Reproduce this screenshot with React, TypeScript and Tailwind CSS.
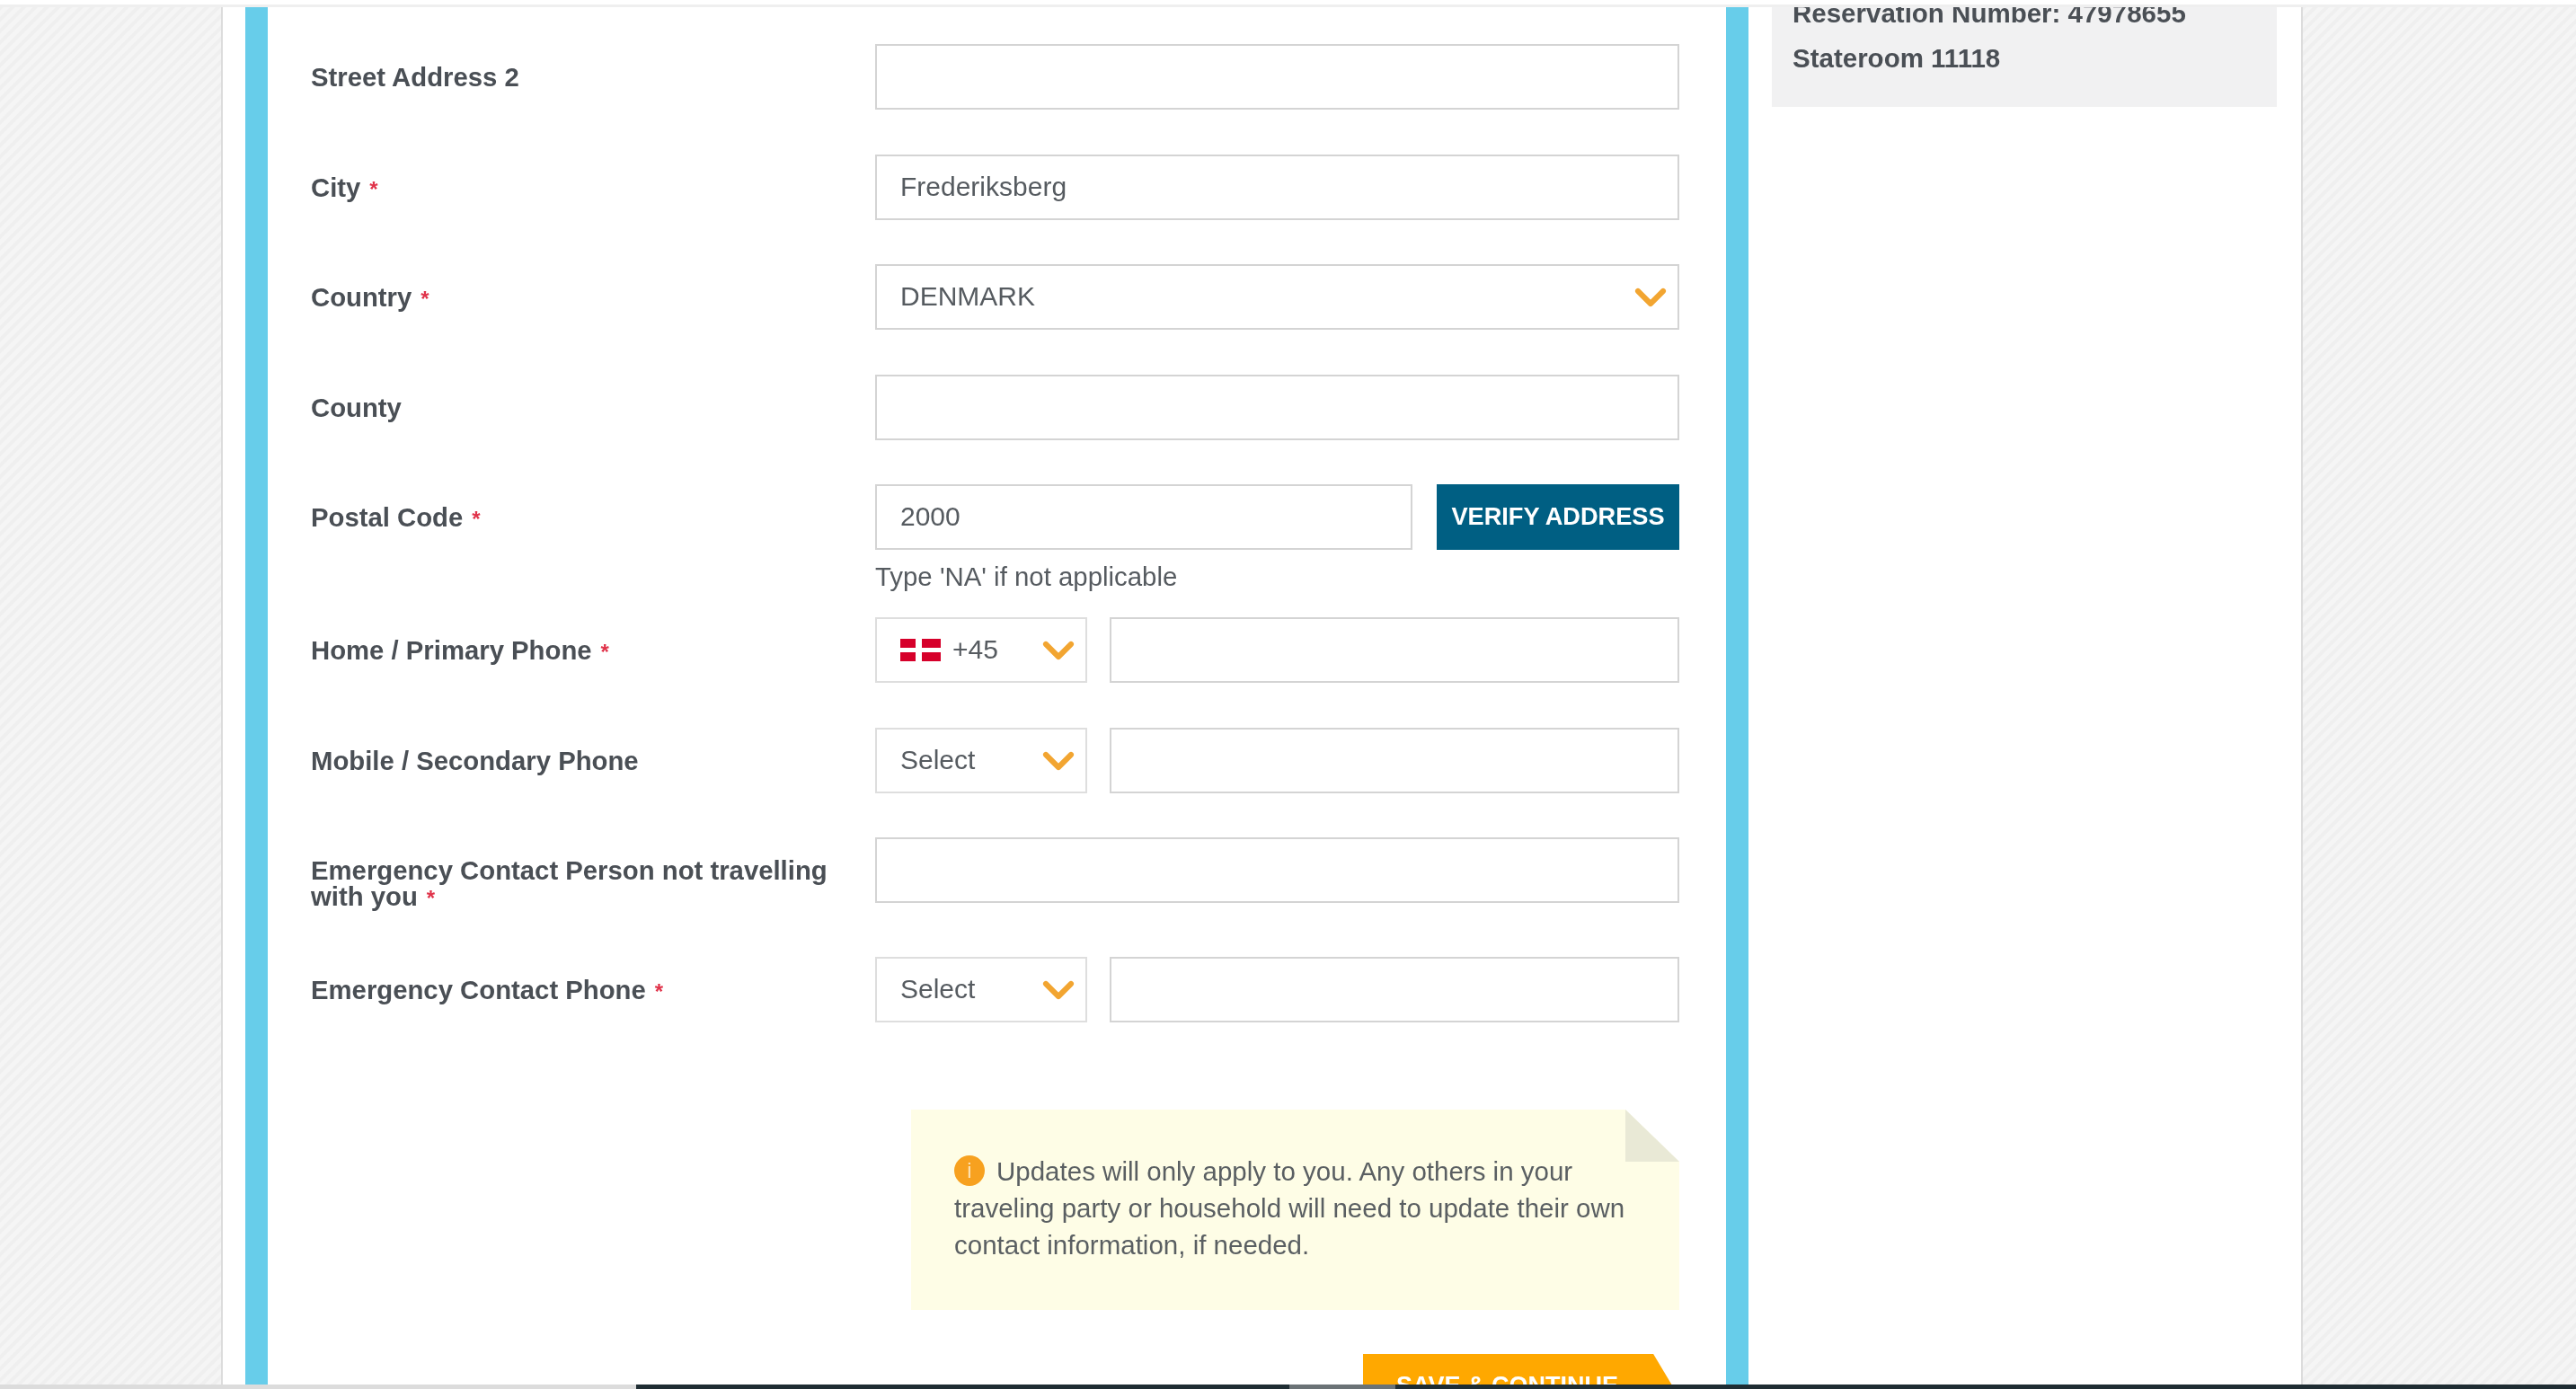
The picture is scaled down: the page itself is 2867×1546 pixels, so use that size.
import { ChevronDown } from 'lucide-react'

const Required = () => <span className="ml-[10px] text-[24px] leading-none text-[#e0334a]">*</span>

const Label = ({ text, required }: { text: string; required?: boolean }) => (
  <label className="w-[628px] shrink-0 pr-[30px] pt-[22px] text-[29.3px] leading-[29px] font-bold text-[#4a4f55]">
    {text}
    {required && <Required />}
  </label>
)

const Field = ({ value }: { value?: string }) => (
  <div className="flex h-[73px] min-w-0 flex-1 items-center border-2 border-[#d4d4d4] bg-white px-[26px] pb-[2px] text-[30px] text-[#565b60]">
    {value}
  </div>
)

const Chevron = () => (
  <ChevronDown className="mr-[2px] shrink-0 text-[#f2a531]" size={56} strokeWidth={2.6} />
)

const Flag = () => (
  <svg width="45" height="25" viewBox="0 0 45 25" className="mr-[13px] shrink-0">
    <rect width="45" height="25" fill="#d6002a" />
    <rect x="17" width="7" height="25" fill="#fff" />
    <rect y="10" width="45" height="5" fill="#fff" />
  </svg>
)

const CodeSelect = ({ flag, value }: { flag?: boolean; value: string }) => (
  <div className="flex h-[73px] w-[236px] shrink-0 items-center border-2 border-[#dedede] bg-white pl-[26px] text-[30px] text-[#565b60]">
    {flag && <Flag />}
    <span className="flex-1 pb-[2px]">{value}</span>
    <Chevron />
  </div>
)

const PhoneField = ({ flag, value }: { flag?: boolean; value: string }) => (
  <div className="flex flex-1 gap-[25px]">
    <CodeSelect flag={flag} value={value} />
    <Field />
  </div>
)

const Row = ({
  text,
  required,
  className,
  children,
}: {
  text: string
  required?: boolean
  className: string
  children: React.ReactNode
}) => (
  <div className={`flex ${className}`}>
    <Label text={text} required={required} />
    {children}
  </div>
)

export default function App() {
  return (
    <div className="relative flex h-[1546px] w-full overflow-hidden bg-white font-['Liberation_Sans',Arial,sans-serif] blur-[0.7px]">
      {/* top edge of the frame */}
      <div className="absolute inset-x-0 top-0 z-20 h-[8px] border-b-[3px] border-[#efefef] bg-white" />
      {/* bottom scrollbar */}
      <div className="absolute inset-x-0 bottom-0 z-20 flex h-[5px] bg-[#dcdcdc]">
        <div className="ml-[708px] w-[727px] bg-[#1f2d33]" />
        <div className="w-[118px] bg-[#6b7376]" />
        <div className="flex-1 bg-[#1f2d33]" />
      </div>

      {/* hatched page background */}
      <div className="w-[248px] shrink-0 border-r-2 border-[#dcdcdc] bg-[repeating-linear-gradient(135deg,#f5f5f5_0px,#f5f5f5_4px,#efefef_5px,#efefef_8px,#f5f5f5_9px)]" />

      <div className="flex w-[2313px] shrink-0 pl-[25px]">
        <div className="w-[25px] shrink-0 bg-[#67cdea]" />

        {/* form column */}
        <main className="w-[1623px] shrink-0 pl-[48px] pr-[52px] pt-[49px]">
          <Row text="Street Address 2" className="mb-[50px]">
            <Field />
          </Row>
          <Row text="City" required className="mb-[49px]">
            <Field value="Frederiksberg" />
          </Row>
          <Row text="Country" required className="mb-[50px]">
            <div className="flex h-[73px] flex-1 items-center border-2 border-[#d4d4d4] bg-white pl-[26px] text-[30px] text-[#565b60]">
              <span className="flex-1 pb-[2px]">DENMARK</span>
              <Chevron />
            </div>
          </Row>
          <Row text="County" className="mb-[49px]">
            <Field />
          </Row>
          <Row text="Postal Code" required className="mb-[88px]">
            <div className="flex-1">
              <div className="flex gap-[27px]">
                <Field value="2000" />
                <button className="h-[73px] w-[270px] shrink-0 bg-[#005f83] text-[27.2px] font-bold text-white">
                  VERIFY ADDRESS
                </button>
              </div>
              <p className="-mb-[60px] mt-[13px] text-[29.4px] leading-[34px] text-[#565b60]">
                Type 'NA' if not applicable
              </p>
            </div>
          </Row>
          <Row text="Home / Primary Phone" required className="mb-[50px]">
            <PhoneField flag value="+45" />
          </Row>
          <Row text="Mobile / Secondary Phone" className="mb-[49px]">
            <PhoneField value="Select" />
          </Row>
          <Row text="Emergency Contact Person not travelling with you" required className="mb-[53px]">
            <Field />
          </Row>
          <Row text="Emergency Contact Phone" required className="mb-[97px]">
            <PhoneField value="Select" />
          </Row>

          {/* notice */}
          <div className="relative ml-[668px] h-[223px] w-[855px] bg-[#fefde6] pl-[48px] pr-[50px] pt-[48px] text-[29.5px] leading-[41px] text-[#5a5f62]">
            <svg className="absolute right-0 top-0" width="60" height="58" viewBox="0 0 60 58">
              <polygon points="0,0 60,0 60,58" fill="#fff" />
              <polygon points="0,0 60,58 0,58" fill="#e9e9d6" />
            </svg>
            <span className="mr-[13px] inline-flex h-[34px] w-[34px] -translate-y-[3px] items-center justify-center rounded-full bg-[#f7a11f] align-baseline text-[24px] leading-none text-[#fde2b4]">
              i
            </span>
            Updates will only apply to you. Any others in your traveling party or household will need to update their own contact information, if needed.
          </div>

          <div className="mt-[49px] flex justify-end">
            <div className="mr-[-7px] h-[60px] w-[359px] bg-[#ffa800] pr-[38px] pt-[18px] text-center text-[27px] font-bold leading-[34px] text-[#fff] [clip-path:polygon(0_0,90%_0,100%_100%,0_100%)]">
              SAVE &amp; CONTINUE
            </div>
          </div>
        </main>

        <div className="w-[25px] shrink-0 bg-[#67cdea]" />

        {/* reservation sidebar */}
        <aside className="flex-1 pl-[26px] pr-[27px]">
          <div className="flow-root h-[119px] bg-[#f1f1f2] pl-[23px] text-[29.5px] leading-[50px] font-bold text-[#4a4f55]">
            <p className="-mt-[10px]">Reservation Number: 47978655</p>
            <p>Stateroom 11118</p>
          </div>
        </aside>
      </div>

      <div className="flex-1 border-l-2 border-[#dcdcdc] bg-[repeating-linear-gradient(135deg,#f5f5f5_0px,#f5f5f5_4px,#efefef_5px,#efefef_8px,#f5f5f5_9px)]" />
    </div>
  )
}
